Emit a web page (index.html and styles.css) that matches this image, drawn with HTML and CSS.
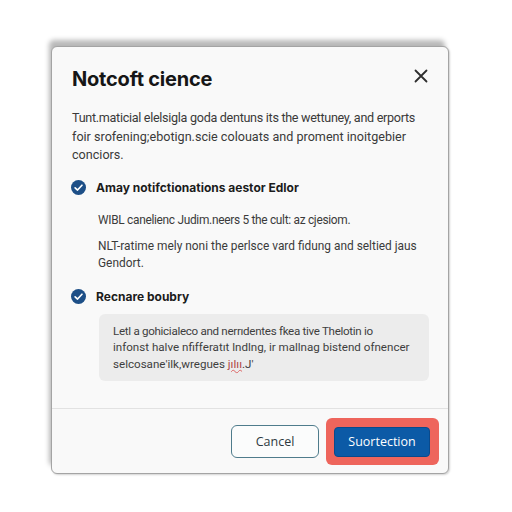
FILE: index.html
```html
<!DOCTYPE html>
<html lang="en">
<head>
<meta charset="utf-8">
<title>Notcoft cience</title>
<link rel="stylesheet" href="styles.css">
</head>
<body>
<div class="dialog" role="dialog" aria-labelledby="dlg-title">
  <div class="dialog-body">
    <div class="dialog-header">
      <h1 id="dlg-title" class="dialog-title">Notcoft cience</h1>
      <button class="close-btn" aria-label="Close">
        <svg width="14" height="14" viewBox="0 0 14 14"><path d="M1.5 1.5 L12.5 12.5 M12.5 1.5 L1.5 12.5" stroke="#2e2e2e" stroke-width="1.8" stroke-linecap="round" fill="none"/></svg>
      </button>
    </div>
    <p class="intro"><span class="squeeze">Tunt.maticial elelsigla goda dentuns its the wettuney, and erports</span><br>foir srofening;ebotign.scie colouats and proment inoitgebier<br>conciors.</p>

    <div class="option">
      <div class="option-head">
        <svg class="check" width="15" height="15" viewBox="0 0 16 16"><circle cx="8" cy="8" r="8" fill="#1d4f87"/><path d="M4.4 8.3 L7 10.7 L11.7 5.6" stroke="#fff" stroke-width="1.8" fill="none" stroke-linecap="round" stroke-linejoin="round"/></svg>
        <span class="option-label">Amay notifctionations aestor Edlor</span>
      </div>
      <div class="option-text">
        <p><span class="squeeze">WIBL canelienc Judim.neers 5 the cult: az cjesiom.</span></p>
        <p>NLT-ratime mely noni the perlsce vard fidung and seltied jaus<br>Gendort.</p>
      </div>
    </div>

    <div class="option option-second">
      <div class="option-head">
        <svg class="check" width="15" height="15" viewBox="0 0 16 16"><circle cx="8" cy="8" r="8" fill="#1d4f87"/><path d="M4.4 8.3 L7 10.7 L11.7 5.6" stroke="#fff" stroke-width="1.8" fill="none" stroke-linecap="round" stroke-linejoin="round"/></svg>
        <span class="option-label">Recnare boubry</span>
      </div>
      <div class="note"><span class="tight">Letl a gohicialeco and nerrıdentes fkea tive Thelotin io</span><br>infonst halve nfifferatıt lndlng, ir mallnag bistend ofnencer<br>selcosane'ilk,wregues <span class="typo">jılıı</span>.J'</div>
    </div>
  </div>

  <div class="dialog-footer">
    <button class="btn btn-secondary">Cancel</button>
    <span class="focus-ring"><button class="btn btn-primary">Suortection</button></span>
  </div>
</div>
</body>
</html>
```

FILE: styles.css
```css
html, body {
  margin: 0;
  padding: 0;
  background: #ffffff;
}

body {
  width: 512px;
  height: 512px;
  font-family: Roboto, "Liberation Sans", sans-serif;
  color: #383838;
  padding-top: 46px;
  padding-left: 51px;
  box-sizing: border-box;
}

.dialog {
  width: 398px;
  height: 428px;
  box-sizing: border-box;
  background: #f9f9f9;
  border: 1px solid #a4a4a4;
  border-radius: 6px;
  box-shadow: -3px -7px 5px -1px rgba(0, 0, 0, 0.28), 1px 1px 2px rgba(0, 0, 0, 0.18);
  display: flex;
  flex-direction: column;
}

.dialog-body {
  flex: 1;
  padding: 19px 10px 0 20px;
}

.dialog-header {
  display: flex;
  align-items: center;
  justify-content: space-between;
  padding-right: 9px;
}

.dialog-title {
  margin: 0;
  font-family: Inter, "Liberation Sans", sans-serif;
  font-size: 20px;
  font-weight: 700;
  line-height: 26px;
  color: #161616;
  letter-spacing: -0.2px;
}

.close-btn {
  background: none;
  border: 0;
  padding: 0;
  margin: -6px 1px 0 0;
  width: 14px;
  height: 14px;
  display: flex;
}

.intro {
  margin: 17px 0 0;
  font-size: 12.6px;
  line-height: 18.5px;
  color: #3a3a3a;
  white-space: nowrap;
}

.squeeze {
  letter-spacing: -0.3px;
}

.option {
  margin-top: 13px;
}

.option-second {
  margin-top: 15px;
}

.option-head {
  display: flex;
  align-items: center;
  gap: 10px;
  height: 20px;
}

.check {
  flex: none;
  margin-left: -1px;
}

.option-label {
  font-family: Inter, "Liberation Sans", sans-serif;
  font-size: 12px;
  font-weight: 700;
  color: #1c1c1c;
}

.option-text {
  padding-left: 26px;
  margin-top: 14px;
}

.option-text p {
  margin: 0 0 9px;
  font-size: 11.9px;
  line-height: 17px;
  color: #3b3b3b;
  white-space: nowrap;
}

.note {
  margin: 7px 9px 0 27px;
  background: #ececec;
  border-radius: 6px;
  padding: 9px 12px 9px 14px;
  font-size: 11.6px;
  line-height: 16.5px;
  color: #3e3e3e;
  white-space: nowrap;
}

.tight {
  letter-spacing: -0.3px;
}

.typo {
  color: #b04545;
  text-decoration: underline wavy #d66;
  text-decoration-thickness: 1px;
}

.dialog-footer {
  border-top: 1px solid #e2e2e2;
  height: 64px;
  display: flex;
  align-items: center;
  justify-content: flex-end;
  gap: 7px;
  padding: 0 9px 0 0;
}

.btn {
  font-family: "Open Sans", "Liberation Sans", sans-serif;
  font-size: 12.5px;
  border-radius: 6px;
  cursor: pointer;
}

.btn-secondary {
  width: 88px;
  height: 33px;
  background: #fbfcfc;
  border: 1.5px solid #4f7c8c;
  color: #2d3a40;
}

.focus-ring {
  display: flex;
  background: #ee655c;
  border-radius: 6px;
  padding: 9px 9px 8px 8px;
}

.btn-primary {
  width: 96px;
  height: 30px;
  background: #0c5aa6;
  border: 1px solid #0a4a8c;
  border-radius: 4px;
  color: #ffffff;
}
```
